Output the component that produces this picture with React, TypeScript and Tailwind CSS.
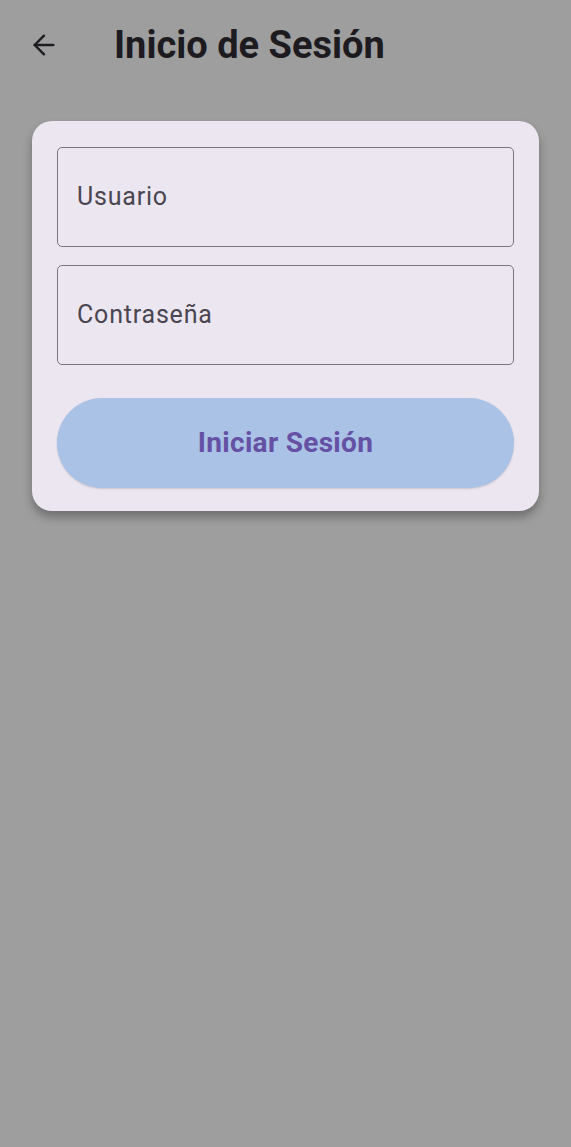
import { ArrowLeft } from 'lucide-react';

function Field({ label }: { label: string }) {
  return (
    <div className="h-[100px] rounded-[5px] border-[1.5px] border-[#7a7580] flex items-center px-[19px]">
      <span className="text-[25px] tracking-[0.8px] text-[#4a4550]">{label}</span>
    </div>
  );
}

export default function App() {
  return (
    <div
      className="min-h-[1147px] w-full bg-[#9e9e9e]"
      style={{ fontFamily: 'Roboto, "Noto Sans", sans-serif' }}
    >
      {/* App bar */}
      <header className="h-[90px] flex items-center pl-[28px]">
        <ArrowLeft className="w-[32px] h-[32px] text-[#1d1b20]" strokeWidth={1.8} />
        <h1 className="ml-[54px] text-[38px] font-bold text-[#1d1b20] leading-none">Inicio de Sesión</h1>
      </header>

      {/* Login card */}
      <div className="mx-[32px] mt-[31px] rounded-[20px] bg-[#ece6f1] px-[25px] pt-[26px] pb-[23px] shadow-[0_6px_10px_rgba(0,0,0,0.3)]">
        <div className="flex flex-col gap-[18px]">
          <Field label="Usuario" />
          <Field label="Contraseña" />
        </div>
        <button className="mt-[33px] w-full h-[90px] rounded-full bg-[#a9c2e6] shadow-[0_1px_2px_rgba(0,0,0,0.15)] text-[28px] tracking-[0.3px] font-bold text-[#6650a4]">
          Iniciar Sesión
        </button>
      </div>
    </div>
  );
}
